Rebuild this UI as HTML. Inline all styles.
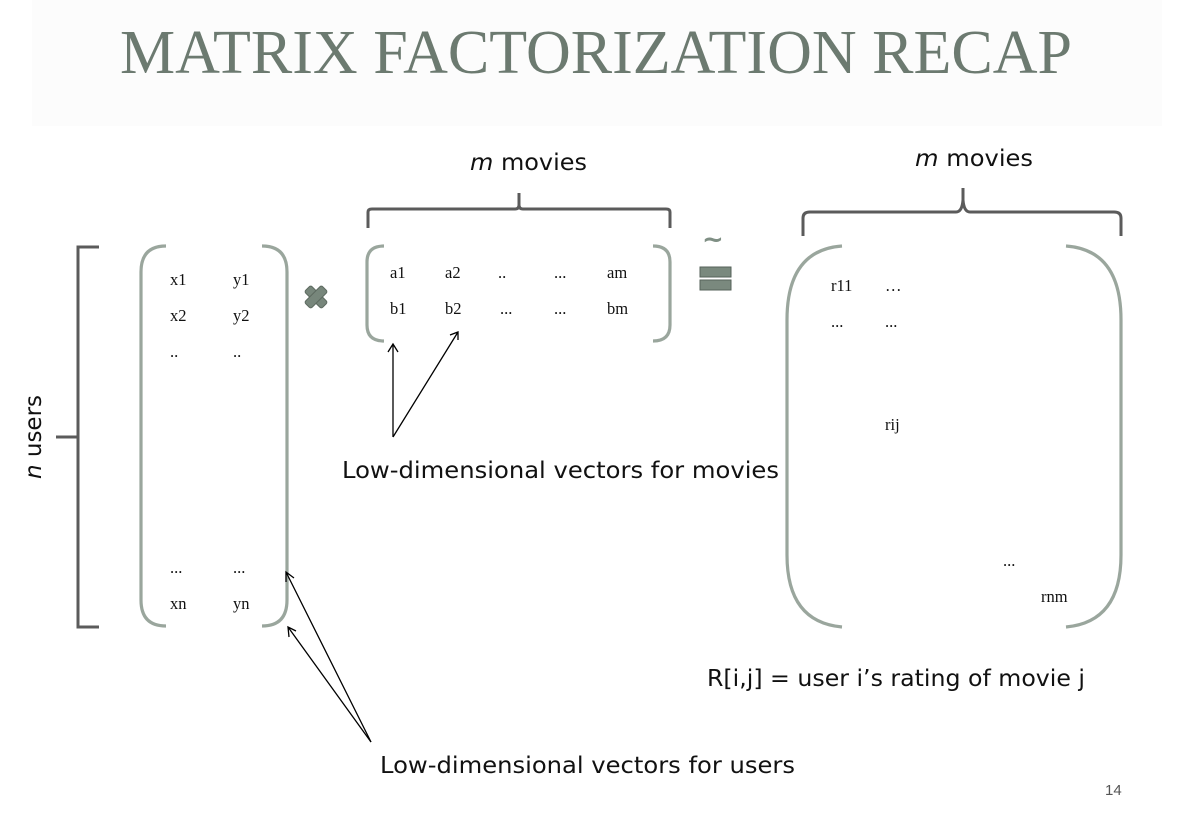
<!DOCTYPE html>
<html><head><meta charset="utf-8"><style>
html,body{margin:0;padding:0;background:#fff;}
svg{display:block}
.s{font-family:"Liberation Serif",serif;font-size:16.5px;fill:#111}
.a{font-family:"DejaVu Sans","Liberation Sans",sans-serif;font-size:23px;fill:#111}
</style></head><body>
<svg width="1188" height="819" viewBox="0 0 1188 819" xmlns="http://www.w3.org/2000/svg">
<rect x="32" y="0" width="1130" height="126" fill="#fcfcfc"/>
<text x="120" y="73" textLength="952" lengthAdjust="spacingAndGlyphs" font-family="Liberation Serif,serif" font-size="62" fill="#6c7a70">MATRIX FACTORIZATION RECAP</text>

<g fill="none" stroke="#5b5b5b" stroke-width="3">
<path d="M99 247 H78 V627 H99 M78 437 H56"/>
<path d="M368 228 V212 Q368 209 372 209 H515 Q519 209 519 205 V193 M519 205 Q519 209 523 209 H666 Q670 209 670 212 V228"/>
<path d="M803 236 V218 Q803 212 810 212 H956 Q962 212 963 200 V188 M963 200 Q964 212 970 212 H1114 Q1121 212 1121 218 V236"/>
</g>

<g fill="none" stroke="#9aa69d" stroke-width="3.2">
<path d="M166 246 Q141 246 141 272 V600 Q141 626 166 626"/>
<path d="M262 246 Q287 246 287 272 V600 Q287 626 262 626"/>
<path d="M384 246 Q367 246 367 262 V325 Q367 341 384 341"/>
<path d="M653 246 Q670 246 670 262 V325 Q670 341 653 341"/>
<path d="M842 246 Q787 250 787 320 V555 Q787 622 842 627"/>
<path d="M1066 246 Q1121 250 1121 320 V555 Q1121 622 1066 627"/>
</g>

<text class="s" x="170" y="285">x1</text><text class="s" x="233" y="285">y1</text>
<text class="s" x="170" y="321">x2</text><text class="s" x="233" y="321">y2</text>
<text class="s" x="170" y="357">..</text><text class="s" x="233" y="357">..</text>
<text class="s" x="170" y="573">...</text><text class="s" x="233" y="573">...</text>
<text class="s" x="170" y="609">xn</text><text class="s" x="233" y="609">yn</text>

<text class="s" x="390" y="278">a1</text><text class="s" x="445" y="278">a2</text><text class="s" x="498" y="278">..</text><text class="s" x="554" y="278">...</text><text class="s" x="607" y="278">am</text>
<text class="s" x="390" y="314">b1</text><text class="s" x="445" y="314">b2</text><text class="s" x="500" y="314">...</text><text class="s" x="554" y="314">...</text><text class="s" x="607" y="314">bm</text>

<text class="s" x="831" y="291">r11</text><text class="s" x="885" y="291">…</text>
<text class="s" x="831" y="327">...</text><text class="s" x="885" y="327">...</text>
<text class="s" x="885" y="430">rij</text>
<text class="s" x="1003" y="566">...</text>
<text class="s" x="1041" y="602">rnm</text>

<g transform="translate(316,297) rotate(45)"><rect x="-12" y="-4.5" width="24" height="9" rx="2" fill="#77867b" stroke="#5d6a60"/><rect x="-4.5" y="-12" width="9" height="24" rx="2" fill="#77867b" stroke="#5d6a60"/></g>
<text x="702" y="248" font-family="DejaVu Sans,sans-serif" font-size="26" font-weight="bold" fill="#7f8f84">~</text>
<rect x="700" y="267" width="31" height="10" fill="#7a897e" stroke="#56625a"/>
<rect x="700" y="280" width="31" height="10" fill="#7a897e" stroke="#56625a"/>

<g stroke="#000" stroke-width="1.3" fill="none">
<path d="M393 437 V344 M388 352 L393 344 L398 352"/>
<path d="M393 437 L458 332 M450 335 L458 332 L458 340"/>
<path d="M371 742 L286 572 M286 582 L286 572 L294 578"/>
<path d="M371 742 L288 627 M289 637 L288 627 L296 631"/>
</g>

<text class="a" x="470" y="170" textLength="117" lengthAdjust="spacingAndGlyphs"><tspan font-style="italic">m</tspan> movies</text>
<text class="a" x="915" y="166" textLength="118" lengthAdjust="spacingAndGlyphs"><tspan font-style="italic">m</tspan> movies</text>
<text class="a" transform="translate(41,437) rotate(-90)" text-anchor="middle"><tspan font-style="italic">n</tspan> users</text>
<text class="a" x="342" y="478" textLength="437" lengthAdjust="spacingAndGlyphs">Low-dimensional vectors for movies</text>
<text class="a" x="380" y="773" textLength="415" lengthAdjust="spacingAndGlyphs">Low-dimensional vectors for users</text>
<text class="a" x="707" y="686" textLength="378" lengthAdjust="spacingAndGlyphs">R[i,j] = user i’s rating of movie j</text>
<text x="1105" y="795" font-family="Liberation Sans,sans-serif" font-size="15" fill="#555">14</text>
</svg>
</body></html>
